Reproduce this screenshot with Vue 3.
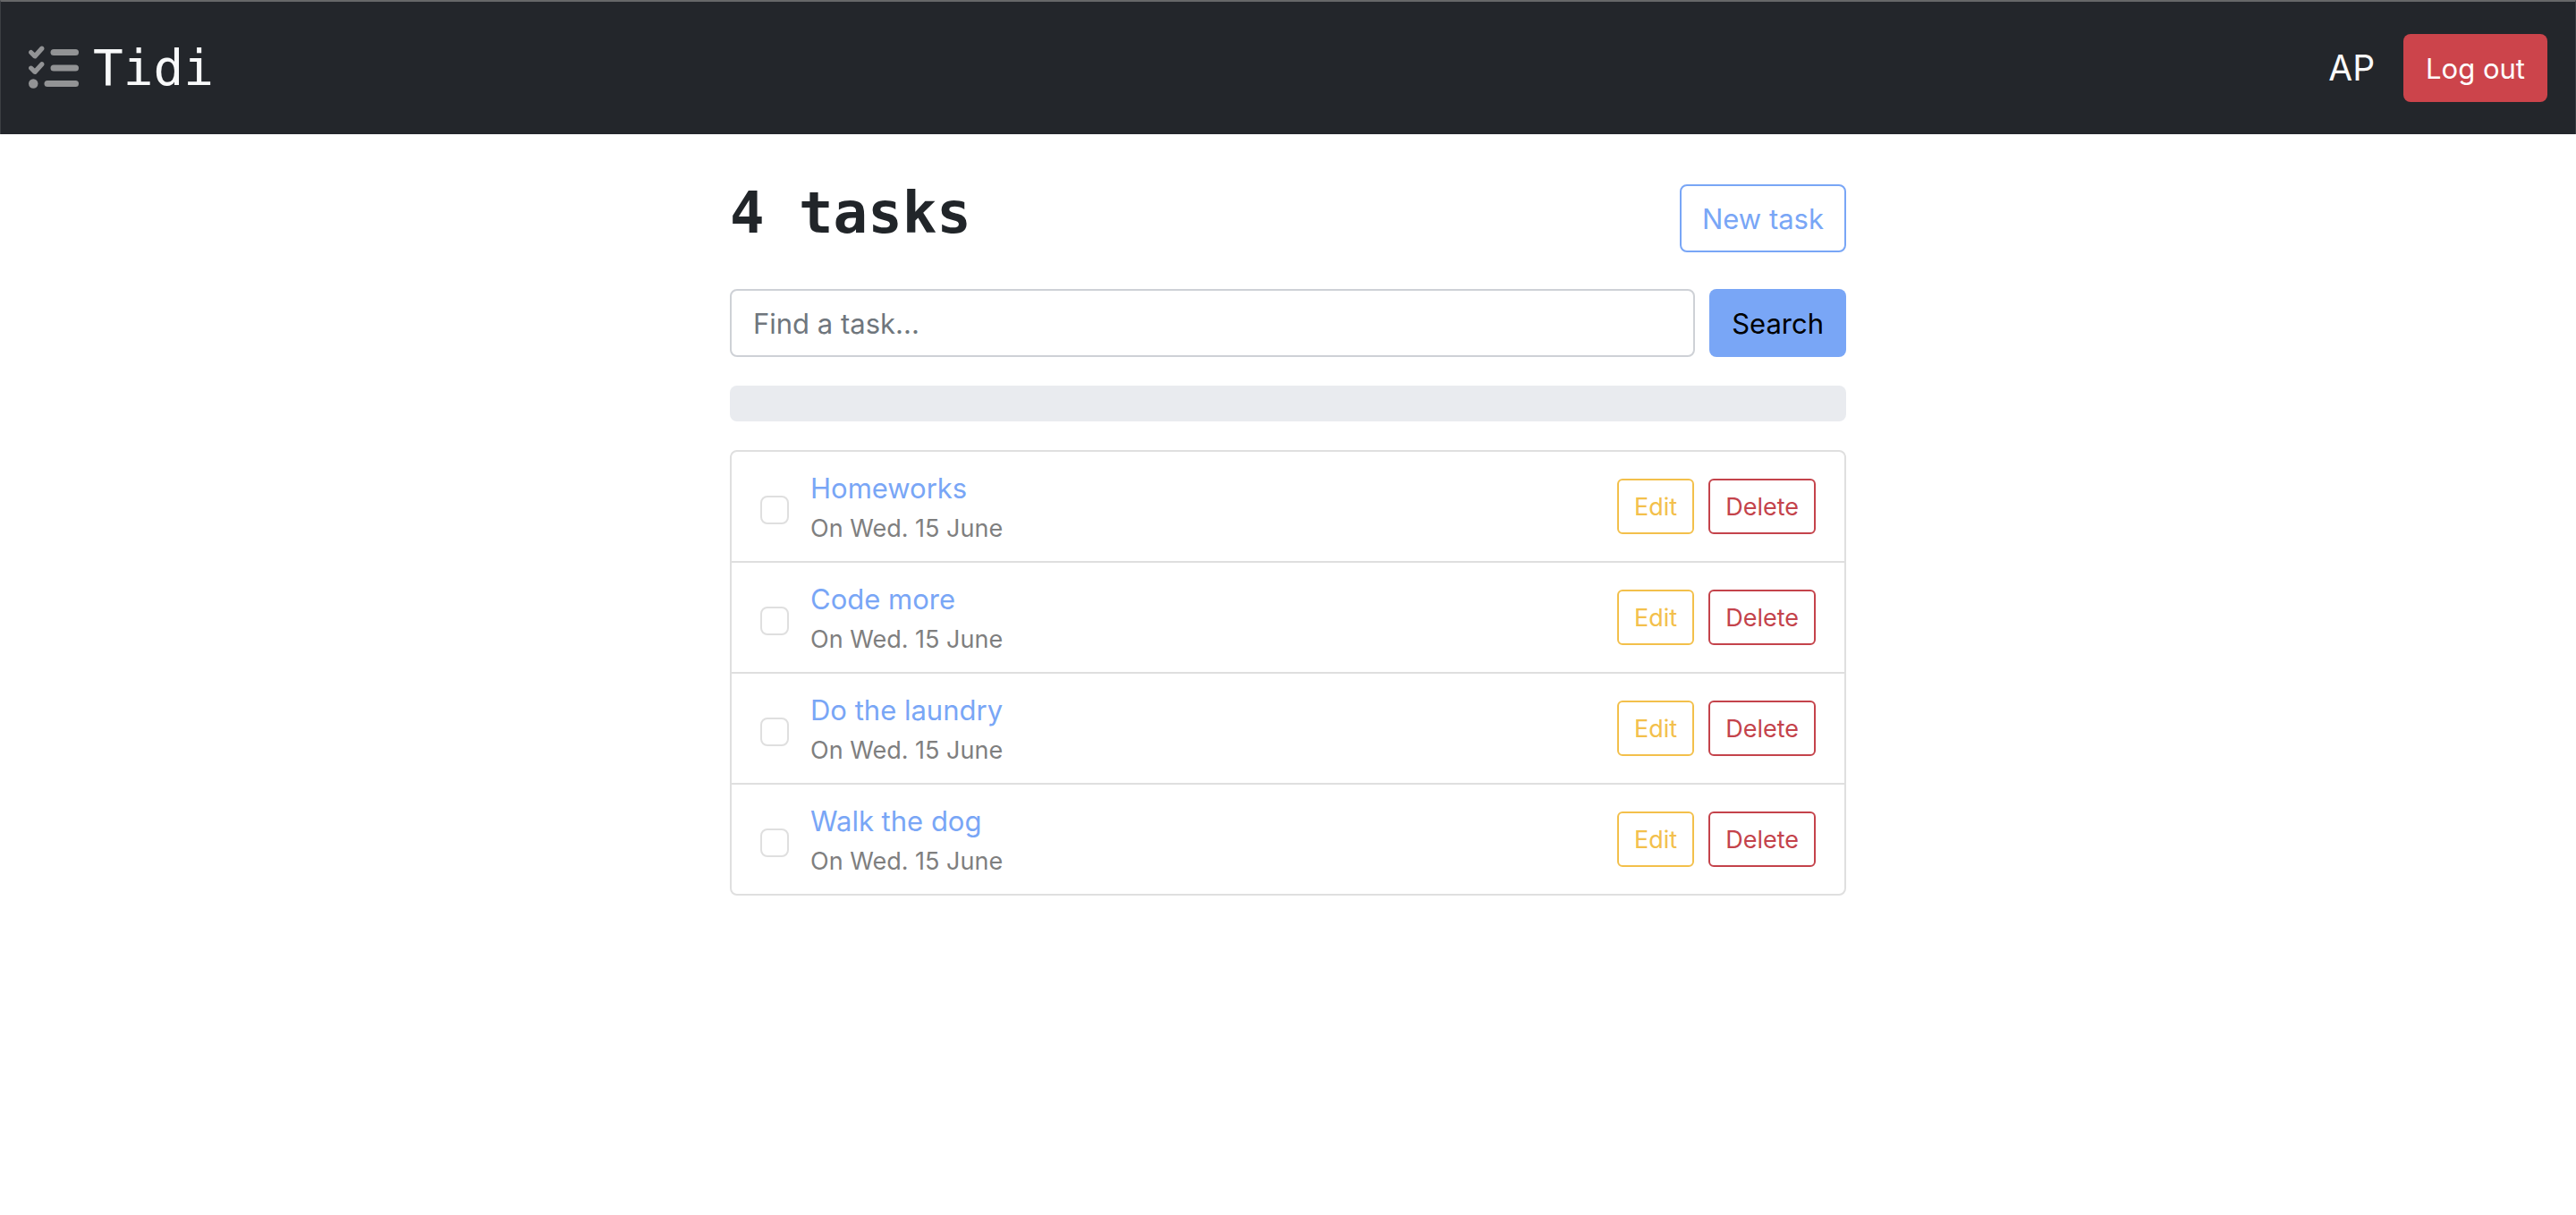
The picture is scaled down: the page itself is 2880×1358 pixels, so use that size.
<script setup>
import { ref } from 'vue'

const query = ref('')
const tasks = ref([
  { id: 1, title: 'Homeworks', due: 'On Wed. 15 June', done: false },
  { id: 2, title: 'Code more', due: 'On Wed. 15 June', done: false },
  { id: 3, title: 'Do the laundry', due: 'On Wed. 15 June', done: false },
  { id: 4, title: 'Walk the dog', due: 'On Wed. 15 June', done: false },
])
</script>

<template>
  <div class="page">
    <header class="navbar">
      <a class="brand" href="#">
        <svg class="brand-icon" viewBox="0 0 512 512" fill="currentColor" aria-hidden="true">
          <path d="M152.1 38.2c9.9 8.9 10.7 24 1.8 33.9l-72 80c-4.4 4.9-10.6 7.8-17.2 7.9s-12.9-2.4-17.6-7L7 113C-2.3 103.6-2.3 88.4 7 79s24.6-9.4 33.9 0l22.1 22.1 55.1-61.2c8.9-9.9 24-10.7 33.9-1.8z" />
          <path d="M152.1 198.2c9.9 8.9 10.7 24 1.8 33.9l-72 80c-4.4 4.9-10.6 7.8-17.2 7.9s-12.9-2.4-17.6-7L7 273c-9.4-9.4-9.4-24.6 0-33.9s24.6-9.4 33.9 0l22.1 22.1 55.1-61.2c8.9-9.9 24-10.7 33.9-1.8z" />
          <rect x="224" y="64" width="288" height="64" rx="32" />
          <rect x="224" y="224" width="288" height="64" rx="32" />
          <rect x="160" y="384" width="352" height="64" rx="32" />
          <circle cx="48" cy="416" r="48" />
        </svg>
        <span>Tidi</span>
      </a>
      <div class="account">
        <span class="initials">AP</span>
        <button type="button" class="btn btn-danger">Log out</button>
      </div>
    </header>

    <main class="content">
      <div class="heading">
        <h1>{{ tasks.length }} tasks</h1>
        <button type="button" class="btn btn-outline">New task</button>
      </div>

      <form class="search" @submit.prevent>
        <input v-model="query" class="search-input" type="text" placeholder="Find a task..." aria-label="Find a task" />
        <button type="submit" class="btn btn-primary">Search</button>
      </form>

      <div class="progress" role="progressbar" aria-label="Tasks done" aria-valuenow="0" aria-valuemin="0" aria-valuemax="100"></div>

      <ul class="tasks">
        <li v-for="task in tasks" :key="task.id" class="task">
          <input v-model="task.done" type="checkbox" class="check" :aria-labelledby="`task-${task.id}`" />
          <div class="details">
            <a :id="`task-${task.id}`" class="title" href="#">{{ task.title }}</a>
            <span class="due">{{ task.due }}</span>
          </div>
          <div class="actions">
            <button type="button" class="btn btn-small btn-edit">Edit</button>
            <button type="button" class="btn btn-small btn-delete">Delete</button>
          </div>
        </li>
      </ul>
    </main>
  </div>
</template>

<style>
body {
  margin: 0;
  background: #fff;
}
</style>

<style scoped>
*,
*::before,
*::after {
  box-sizing: border-box;
}

.page {
  font-family: Inter, "Liberation Sans", sans-serif;
  font-size: 31px;
  line-height: 48px;
  color: #212529;
}

.navbar {
  display: flex;
  align-items: center;
  justify-content: space-between;
  padding: 36px 31px;
  background: #23262b;
  border: 1px solid #3b3e42;
  border-top: 2px solid #666769;
  border-bottom: 0;
}

.brand {
  display: flex;
  align-items: center;
  gap: 16px;
  color: #f8f9fa;
  font-family: "DejaVu Sans Mono", monospace;
  font-size: 56px;
  line-height: 76px;
  text-decoration: none;
}

.brand-icon {
  width: 56px;
  height: 56px;
  color: #929395;
}

.account {
  display: flex;
  align-items: center;
  gap: 32px;
}

.initials {
  color: #f8f9fa;
  font-size: 39px;
  line-height: 50px;
}

.btn {
  padding: 13px 23px 11px;
  border: 2px solid transparent;
  border-radius: 8px;
  background: transparent;
  font-family: inherit;
  font-size: 31px;
  line-height: 48px;
  white-space: nowrap;
  cursor: pointer;
}

.btn-danger {
  background: #cc444b;
  color: #fff;
}

.btn-outline {
  border-color: #79a6f6;
  color: #79a6f6;
}

.btn-primary {
  background: #79a6f6;
  color: #000;
}

.btn-small {
  padding: 9px 17px 7px;
  border-radius: 6px;
  font-size: 27px;
  line-height: 42px;
}

.btn-edit {
  border-color: #f3c04b;
  color: #f3c04b;
}

.btn-delete {
  border-color: #c4434b;
  color: #c4434b;
}

.content {
  max-width: 1248px;
  margin: 0 auto;
  padding: 56px 0;
}

.heading {
  display: flex;
  align-items: flex-start;
  justify-content: space-between;
  margin-bottom: 41px;
}

h1 {
  margin: 0;
  font-family: "DejaVu Sans Mono", monospace;
  font-size: 64px;
  font-weight: 700;
  line-height: 64px;
}

.search {
  display: flex;
  gap: 16px;
  margin-bottom: 32px;
}

.search-input {
  flex: 1;
  min-width: 0;
  padding: 13px 24px 11px;
  border: 2px solid #ced1d6;
  border-radius: 8px;
  background: #fff;
  color: #212529;
  font-family: inherit;
  font-size: 31px;
  line-height: 48px;
}

.search-input::placeholder {
  color: #6f767d;
  opacity: 1;
}

.progress {
  height: 40px;
  margin-bottom: 32px;
  border-radius: 8px;
  background: #e9ebef;
}

.tasks {
  margin: 0;
  padding: 0;
  border: 2px solid #dfdfdf;
  border-radius: 8px;
  list-style: none;
}

.task {
  display: flex;
  align-items: center;
  padding: 16px 32px;
}

.task + .task {
  border-top: 2px solid #dfdfdf;
}

.check {
  appearance: none;
  width: 32px;
  height: 32px;
  margin: 8px 24px 0 0;
  border: 2px solid #dfdfdf;
  border-radius: 8px;
  background: #fff;
}

.check:checked {
  background: #79a6f6;
}

.details {
  display: flex;
  flex: 1;
  flex-direction: column;
  align-items: flex-start;
}

.title {
  color: #79a6f6;
  line-height: 50px;
  text-decoration: none;
}

.due {
  color: #7f7f7f;
  font-size: 27px;
  line-height: 40px;
}

.actions {
  display: flex;
  gap: 16px;
}
</style>
